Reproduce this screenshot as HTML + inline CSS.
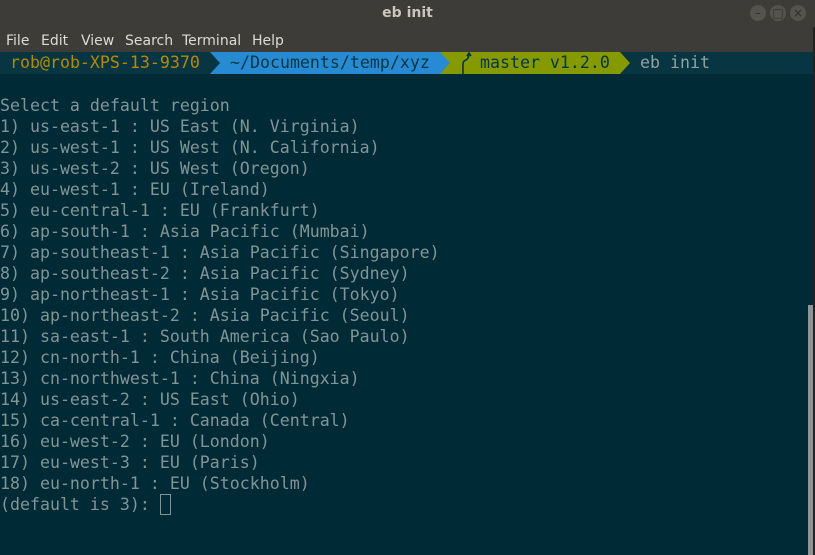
<!DOCTYPE html>
<html><head><meta charset="utf-8"><style>
*{margin:0;padding:0;box-sizing:border-box}
body{width:815px;height:555px;overflow:hidden;background:#002b36;position:relative;font-family:"DejaVu Sans Mono","Liberation Mono",monospace}
#title{position:absolute;left:0;top:0;width:815px;height:27px;background:#3d3c38;color:#c9c6bd;font:bold 14px "DejaVu Sans","Liberation Sans",sans-serif;text-align:center;line-height:27px}
.btn{position:absolute;top:5px;width:16px;height:16px;border-radius:50%;background:#55534e;color:#2f2e2b;font:12px "DejaVu Sans",sans-serif;line-height:16px;text-align:center}
#menu{position:absolute;left:0;top:27px;width:815px;height:25px;background:#3d3c38;color:#dedbd4;font:14px "DejaVu Sans","Liberation Sans",sans-serif;line-height:28px}
#menu span{position:absolute}
#prompt{position:absolute;left:0;top:52px;width:813px;height:22px;background:#073642;font-size:16.6px;line-height:22px}
.seg{position:absolute;top:0;height:22px;white-space:pre}
pre{position:absolute;left:0;top:95px;font-family:"DejaVu Sans Mono",monospace;font-size:16.6px;line-height:21px;color:#839496}
#cur{position:absolute;left:160px;top:494px;width:11px;height:21px;border:1px solid #839496}
#sb{position:absolute;left:808px;top:305px;width:5px;height:250px;background:#8f9596}
#edge{position:absolute;left:813px;top:27px;width:2px;height:528px;background:#222}
</style></head><body>
<div id="title">eb init</div>
<div class="btn" style="left:750px">–</div>
<div class="btn" style="left:770px">□</div>
<div class="btn" style="left:790px">×</div>
<div id="menu"><span style="left:6px">File</span><span style="left:41px">Edit</span><span style="left:81px">View</span><span style="left:125px">Search</span><span style="left:182px">Terminal</span><span style="left:252px">Help</span></div>
<div id="prompt">
<div class="seg" style="left:0;width:210px;color:#b58900;padding-left:10px">rob@rob-XPS-13-9370</div>
<svg class="seg" style="left:200px" width="440" height="22"><polygon points="240,0 420,0 430,11 420,22 240,22" fill="#859900"/><polygon points="10,0 240,0 250,11 240,22 10,22 20,11" fill="#268bd2"/><path d="M263,22 V12 Q263,9 266,8 Q269,6 269,2 M267,4 L269,1 L271,4" stroke="#073642" stroke-width="1.6" fill="none"/></svg>
<div class="seg" style="left:230px;color:#073642">~/Documents/temp/xyz</div>
<div class="seg" style="left:480px;color:#073642">master v1.2.0</div>
<div class="seg" style="left:640px;color:#93a1a1">eb init</div>
</div>
<pre>Select a default region
1) us-east-1 : US East (N. Virginia)
2) us-west-1 : US West (N. California)
3) us-west-2 : US West (Oregon)
4) eu-west-1 : EU (Ireland)
5) eu-central-1 : EU (Frankfurt)
6) ap-south-1 : Asia Pacific (Mumbai)
7) ap-southeast-1 : Asia Pacific (Singapore)
8) ap-southeast-2 : Asia Pacific (Sydney)
9) ap-northeast-1 : Asia Pacific (Tokyo)
10) ap-northeast-2 : Asia Pacific (Seoul)
11) sa-east-1 : South America (Sao Paulo)
12) cn-north-1 : China (Beijing)
13) cn-northwest-1 : China (Ningxia)
14) us-east-2 : US East (Ohio)
15) ca-central-1 : Canada (Central)
16) eu-west-2 : EU (London)
17) eu-west-3 : EU (Paris)
18) eu-north-1 : EU (Stockholm)
(default is 3): </pre>
<div id="cur"></div>
<div id="sb"></div>
<div id="edge"></div>
</body></html>
